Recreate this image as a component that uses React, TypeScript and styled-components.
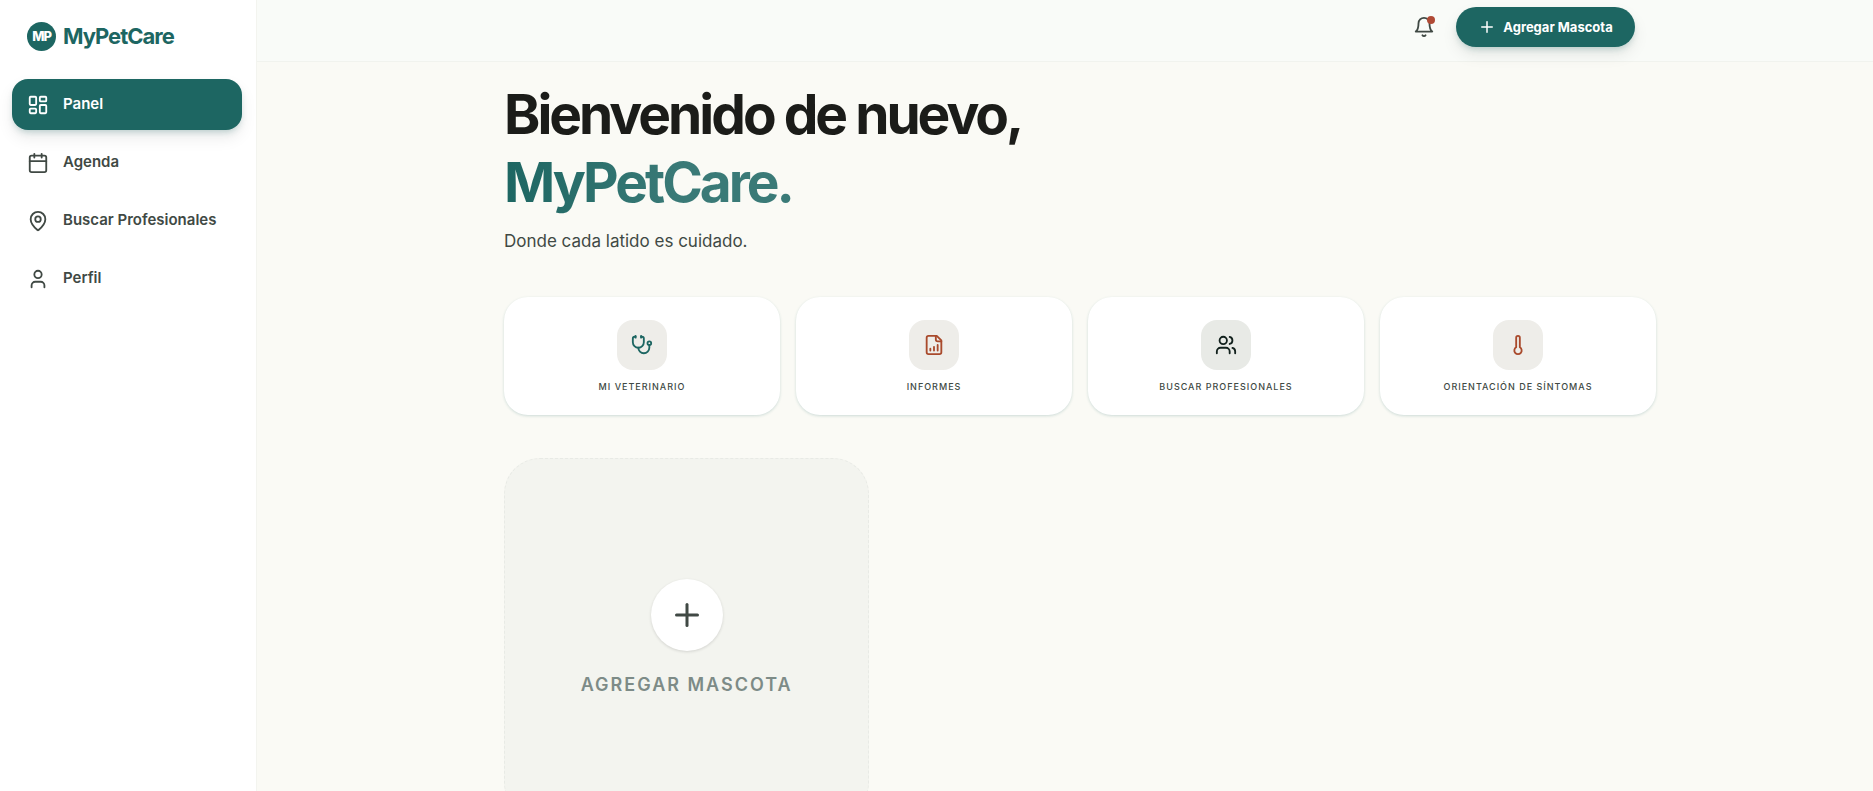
import React from 'react';
import styled, { createGlobalStyle, css } from 'styled-components';
import { Plus } from 'lucide-react';

const GlobalStyle = createGlobalStyle`
  *, *::before, *::after { box-sizing: border-box; }
  body {
    margin: 0;
    background: #fafaf5;
    color: #404944;
    font-family: Inter, "Liberation Sans", sans-serif;
  }
  h1, p { margin: 0; }
  button { font: inherit; border: 0; cursor: pointer; }
  a { text-decoration: none; color: inherit; }
`;

const Shell = styled.div`
  display: flex;
  height: 100vh;
  overflow: hidden;
`;

const Sidebar = styled.aside`
  flex: 0 0 257px;
  padding: 21px 14px 21px 12px;
  background: #ffffff;
  border-right: 1px solid #f3f4ef;
`;

const Brand = styled.a`
  display: flex;
  align-items: center;
  gap: 7px;
  height: 30px;
  padding-left: 15px;
  color: #1d6662;
  font-size: 22px;
  font-weight: 700;
  letter-spacing: -1px;
`;

const BrandMark = styled.span`
  display: grid;
  place-items: center;
  width: 29px;
  height: 29px;
  border-radius: 50%;
  background: #1d6662;
  color: #ffffff;
  font-size: 13px;
  font-weight: 800;
`;

const NavList = styled.nav`
  display: flex;
  flex-direction: column;
  gap: 7px;
  margin-top: 28px;
`;

const NavItem = styled.a<{ $active?: boolean }>`
  display: flex;
  align-items: center;
  gap: 14px;
  height: 51px;
  padding: 0 15px;
  border-radius: 16px;
  font-size: 15px;
  font-weight: 600;
  color: #404944;
  ${(p) =>
    p.$active &&
    css`
      background: #1d6662;
      color: #ffffff;
      box-shadow: 0 4px 6px -2px rgba(29, 102, 98, 0.25), 0 8px 16px rgba(27, 28, 25, 0.08);
    `}
`;

const NavLabel = styled.span`
  padding-bottom: 3px;
`;

const Main = styled.main`
  flex: 1;
  min-width: 0;
  overflow: hidden;
`;

const TopBar = styled.header`
  height: 62px;
  padding-top: 7px;
  background: #f9fbf8;
  border-bottom: 1px solid #f1f3ee;
`;

const TopBarInner = styled.div`
  display: flex;
  align-items: center;
  justify-content: flex-end;
  gap: 20px;
  max-width: 1140px;
  margin: 0 auto;
`;

const BellButton = styled.button`
  position: relative;
  display: grid;
  place-items: center;
  width: 24px;
  height: 40px;
  padding: 0;
  background: none;
  color: #404944;
`;

const BellDot = styled.span`
  position: absolute;
  top: 9px;
  right: 1px;
  width: 8px;
  height: 8px;
  border-radius: 50%;
  background: #b04a35;
`;

const PrimaryButton = styled.button`
  display: flex;
  align-items: center;
  justify-content: center;
  gap: 7px;
  width: 179px;
  height: 40px;
  padding: 0 0 1px;
  border-radius: 20px;
  background: #1d6662;
  color: #ffffff;
  font-size: 13px;
  font-weight: 700;
  box-shadow: 0 4px 6px -2px rgba(29, 102, 98, 0.25), 0 8px 16px rgba(27, 28, 25, 0.08);
`;

const Content = styled.div`
  max-width: 1184px;
  margin: 0 auto;
  padding: 18px 1px 48px 31px;
`;

const Title = styled.h1`
  font-size: 55px;
  line-height: 68px;
  font-weight: 700;
  letter-spacing: -3px;
  color: #1b1c19;
`;

const TitleAccent = styled.span`
  display: table;
  padding-right: 4px;
  background: linear-gradient(90deg, #1d6662, #3a7a77 60%);
  background-clip: text;
  -webkit-background-clip: text;
  color: transparent;
`;

const Lead = styled.p`
  margin-top: 12px;
  font-size: 17px;
  line-height: 26px;
`;

const QuickGrid = styled.div`
  display: grid;
  grid-template-columns: repeat(4, 1fr);
  gap: 16px;
  margin-top: 43px;
`;

const QuickCard = styled.button`
  display: flex;
  flex-direction: column;
  align-items: center;
  gap: 9px;
  height: 118px;
  padding: 23px 8px 0;
  border-radius: 24px;
  background: #ffffff;
  color: #404944;
  font-size: 9px;
  line-height: 16px;
  font-weight: 500;
  letter-spacing: 1px;
  text-transform: uppercase;
  box-shadow: 0 1px 3px rgba(29, 102, 98, 0.2);
`;

const IconTile = styled.span<{ $color: string; $bg?: string }>`
  display: grid;
  place-items: center;
  width: 50px;
  height: 50px;
  border-radius: 16px;
  color: ${(p) => p.$color};
  background: ${(p) => p.$bg ?? '#eeede9'};
`;

const PetGrid = styled.div`
  display: grid;
  grid-template-columns: repeat(3, 1fr);
  gap: 28px;
  margin-top: 43px;
`;

const AddPetCard = styled.button`
  display: flex;
  flex-direction: column;
  align-items: center;
  justify-content: center;
  gap: 20px;
  min-height: 360px;
  padding: 0;
  border: 1px dashed #e8eae5;
  border-radius: 36px;
  background: #f3f4ef;
  color: #7d8b87;
  font-size: 18px;
  line-height: 27px;
  font-weight: 600;
  letter-spacing: 2px;
  text-transform: uppercase;
`;

const AddCircle = styled.span`
  display: grid;
  place-items: center;
  width: 72px;
  height: 72px;
  border-radius: 50%;
  background: #ffffff;
  color: #404944;
  box-shadow: 0 1px 3px rgba(27, 28, 25, 0.15);
`;

const Svg = styled.svg`
  flex: none;
  fill: none;
  stroke: currentColor;
  stroke-linecap: round;
  stroke-linejoin: round;
`;

type IconProps = { size?: number; children: React.ReactNode };
const Icon = ({ size = 22, children }: IconProps) => (
  <Svg width={size} height={size} viewBox="0 0 24 24" strokeWidth={2} aria-hidden="true">
    {children}
  </Svg>
);

const DashboardIcon = () => (
  <Icon>
    <rect x="3" y="3" width="7" height="9" rx="1" />
    <rect x="14" y="3" width="7" height="5" rx="1" />
    <rect x="14" y="12" width="7" height="9" rx="1" />
    <rect x="3" y="16" width="7" height="5" rx="1" />
  </Icon>
);
const CalendarIcon = () => (
  <Icon>
    <path d="M8 2v4M16 2v4M3 10h18" />
    <rect x="3" y="4" width="18" height="18" rx="2" />
  </Icon>
);
const PinIcon = () => (
  <Icon>
    <path d="M20 10c0 4.993-5.539 10.193-7.399 11.799a1 1 0 0 1-1.202 0C9.539 20.193 4 14.993 4 10a8 8 0 0 1 16 0" />
    <circle cx="12" cy="10" r="3" />
  </Icon>
);
const UserIcon = () => (
  <Icon>
    <path d="M19 21v-2a4 4 0 0 0-4-4H9a4 4 0 0 0-4 4v2" />
    <circle cx="12" cy="7" r="4" />
  </Icon>
);
const BellIcon = () => (
  <Icon>
    <path d="M6 8a6 6 0 0 1 12 0c0 7 3 9 3 9H3s3-2 3-9" />
    <path d="M10.3 21a1.94 1.94 0 0 0 3.4 0" />
  </Icon>
);
const StethoscopeIcon = () => (
  <Icon>
    <path d="M11 2v2M5 2v2" />
    <path d="M5 3H4a2 2 0 0 0-2 2v4a6 6 0 0 0 12 0V5a2 2 0 0 0-2-2h-1" />
    <path d="M8 15a6 6 0 0 0 12 0v-3" />
    <circle cx="20" cy="10" r="2" />
  </Icon>
);
const ReportIcon = () => (
  <Icon>
    <path d="M15 2H6a2 2 0 0 0-2 2v16a2 2 0 0 0 2 2h12a2 2 0 0 0 2-2V7Z" />
    <path d="M14 2v4a2 2 0 0 0 2 2h4" />
    <path d="M8 18v-2M12 18v-4M16 18v-6" />
  </Icon>
);
const UsersIcon = () => (
  <Icon>
    <path d="M16 21v-2a4 4 0 0 0-4-4H6a4 4 0 0 0-4 4v2" />
    <circle cx="9" cy="7" r="4" />
    <path d="M22 21v-2a4 4 0 0 0-3-3.87M16 3.13a4 4 0 0 1 0 7.75" />
  </Icon>
);
const ThermometerIcon = () => (
  <Icon>
    <path d="M14 4v10.54a4 4 0 1 1-4 0V4a2 2 0 0 1 4 0Z" />
  </Icon>
);

export default function App() {
  return (
    <>
      <GlobalStyle />
      <Shell>
        <Sidebar>
          <Brand href="#">
            <BrandMark>MP</BrandMark>
            MyPetCare
          </Brand>
          <NavList>
            <NavItem href="#panel" $active><DashboardIcon /><NavLabel>Panel</NavLabel></NavItem>
            <NavItem href="#agenda"><CalendarIcon /><NavLabel>Agenda</NavLabel></NavItem>
            <NavItem href="#buscar"><PinIcon /><NavLabel>Buscar Profesionales</NavLabel></NavItem>
            <NavItem href="#perfil"><UserIcon /><NavLabel>Perfil</NavLabel></NavItem>
          </NavList>
        </Sidebar>
        <Main>
          <TopBar>
            <TopBarInner>
              <BellButton aria-label="Notificaciones">
                <BellIcon />
                <BellDot />
              </BellButton>
              <PrimaryButton><Plus size={18} />Agregar Mascota</PrimaryButton>
            </TopBarInner>
          </TopBar>
          <Content>
            <Title>
              Bienvenido de nuevo,
              <TitleAccent>MyPetCare.</TitleAccent>
            </Title>
            <Lead>Donde cada latido es cuidado.</Lead>
            <QuickGrid>
              <QuickCard><IconTile $color="#1d6662"><StethoscopeIcon /></IconTile>Mi veterinario</QuickCard>
              <QuickCard><IconTile $color="#a94a2c"><ReportIcon /></IconTile>Informes</QuickCard>
              <QuickCard><IconTile $color="#12211d" $bg="#e8eae6"><UsersIcon /></IconTile>Buscar profesionales</QuickCard>
              <QuickCard><IconTile $color="#a94a2c"><ThermometerIcon /></IconTile>Orientación de síntomas</QuickCard>
            </QuickGrid>
            <PetGrid>
              <AddPetCard>
                <AddCircle><Plus size={36} /></AddCircle>
                Agregar mascota
              </AddPetCard>
            </PetGrid>
          </Content>
        </Main>
      </Shell>
    </>
  );
}
